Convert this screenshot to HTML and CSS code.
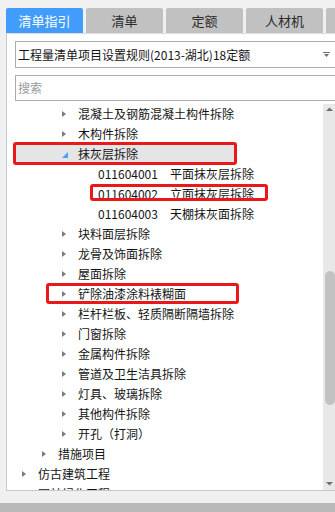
FILE: index.html
```html
<html>
  <head>
    <link rel="stylesheet" href="styles.css">
  </head>
  <body>
    <div class="tabs">
      <div class="tab tab--active">清单指引</div>
      <div class="tab">清单</div>
      <div class="tab">定额</div>
      <div class="tab">人材机</div>
      <div class="tab"></div>
    </div>
    <div class="panel">
      <div class="field field--select">
        <span>工程量清单项目设置规则(2013-湖北)18定额</span>
        <svg class="caret" width="7" height="5" viewBox="0 0 7 5"><rect x="0" y="0" width="7" height="1" fill="#6d6d6d"/><path d="M1 2h5l-2.5 3z" fill="#6d6d6d"/></svg>
      </div>
      <div class="field field--search">搜索</div>
      <div class="tree">
        <ul class="list">
          <li class="row lv3 shut">混凝土及钢筋混凝土构件拆除</li>
          <li class="row lv3 shut">木构件拆除</li>
          <li class="row lv3 open sel">抹灰层拆除<span class="mark mark--a"></span></li>
          <li class="row lv4"><span class="code">011604001</span>平面抹灰层拆除</li>
          <li class="row lv4"><span class="code">011604002</span>立面抹灰层拆除<span class="mark mark--b"></span></li>
          <li class="row lv4"><span class="code">011604003</span>天棚抹灰面拆除</li>
          <li class="row lv3 shut">块料面层拆除</li>
          <li class="row lv3 shut">龙骨及饰面拆除</li>
          <li class="row lv3 shut">屋面拆除</li>
          <li class="row lv3 shut">铲除油漆涂料裱糊面<span class="mark mark--c"></span></li>
          <li class="row lv3 shut">栏杆栏板、轻质隔断隔墙拆除</li>
          <li class="row lv3 shut">门窗拆除</li>
          <li class="row lv3 shut">金属构件拆除</li>
          <li class="row lv3 shut">管道及卫生洁具拆除</li>
          <li class="row lv3 shut">灯具、玻璃拆除</li>
          <li class="row lv3 shut">其他构件拆除</li>
          <li class="row lv3 shut">开孔（打洞）</li>
          <li class="row lv2 shut">措施项目</li>
          <li class="row lv1 shut">仿古建筑工程</li>
          <li class="row lv1 shut">园林绿化工程</li>
        </ul>
        <div class="scroll">
          <svg class="scroll__btn" width="13" height="11" viewBox="0 0 13 11"><path d="M3 7h7L6.5 3.5z" fill="#6d6d6d"/></svg>
          <div class="scroll__track"><div class="scroll__thumb"></div></div>
          <svg class="scroll__btn" width="13" height="12" viewBox="0 0 13 12"><path d="M3 4h7L6.5 7.5z" fill="#6d6d6d"/></svg>
        </div>
      </div>
    </div>
    <div class="statusbar"></div>
  </body>
</html>
```
FILE: styles.css
```css
* {
  margin: 0;
  padding: 0;
  box-sizing: border-box;
}

html, body {
  width: 335px;
  height: 512px;
  overflow: hidden;
}

body {
  background: #f0f0f0;
  font-family: "Noto Sans CJK SC", "Microsoft YaHei", sans-serif;
  font-size: 12px;
  color: #141414;
}

.tabs {
  display: flex;
  gap: 3px;
  padding: 8px 0 0 6px;
  height: 33px;
}

.tab {
  flex: 0 0 77px;
  height: 25px;
  line-height: 25px;
  text-align: center;
  font-size: 13px;
  background: #c1c1c1;
  color: #2a2a2a;
  border-radius: 2px 2px 0 0;
}

.tab--active {
  background: #419cfb;
  color: #fff;
}

.panel {
  margin-left: 6px;
  width: 330px;
  height: 458px;
  background: #fff;
  border-left: 1px solid #c8c8c8;
  border-top: 1px solid #dedede;
  border-bottom: 1px solid #c8c8c8;
  padding-top: 7px;
  padding-left: 8px;
}

.field {
  height: 27px;
  margin-right: -6px;
  border: 1px solid #acacac;
  padding-left: 2px;
  display: flex;
  align-items: center;
  line-height: 20px;
}

.field--select {
  justify-content: space-between;
  padding-right: 11px;
}

.caret {
  display: block;
}

.field--search {
  height: 26px;
  margin-top: 7px;
  color: #9a9a9a;
}

.tree {
  display: flex;
  height: 386px;
  margin-top: 3px;
  margin-left: -8px;
}

.list {
  flex: 1;
  list-style: none;
  overflow: hidden;
  padding-left: 7px;
}

.row {
  position: relative;
  display: flex;
  align-items: center;
  height: 20px;
  line-height: 20px;
  white-space: nowrap;
}

.lv1 { padding-left: 8px; }
.lv2 { padding-left: 28px; }
.lv3 { padding-left: 48px; }
.lv4 { padding-left: 84px; }

.shut::before {
  content: "";
  width: 0;
  height: 0;
  margin-right: 12px;
  border-left: 4px solid #7b7b7b;
  border-top: 3.5px solid transparent;
  border-bottom: 3.5px solid transparent;
}

.open::before {
  content: "";
  width: 0;
  height: 0;
  margin-right: 10px;
  margin-top: 1px;
  border-bottom: 6px solid #4d9ff5;
  border-left: 6px solid transparent;
}

.sel {
  width: 222px;
  background: #e5e5e5;
}

.code {
  margin-right: 12px;
}

/* red annotation frames drawn over the tree */
.mark {
  position: absolute;
  border: 3px solid #e8181b;
  border-radius: 3px;
}

.mark--a {
  left: -1px;
  top: -2px;
  width: 224px;
  height: 23px;
}

.mark--b {
  left: 76px;
  top: 0;
  width: 178px;
  height: 17px;
}

.mark--c {
  left: 32px;
  top: -1px;
  width: 193px;
  height: 21px;
}

.scroll {
  flex: 0 0 13px;
  display: flex;
  flex-direction: column;
  background: #e8e8e8;
}

.scroll__btn {
  display: block;
  flex: none;
}

.scroll__track {
  flex: 1;
  padding: 156px 1px 0 2px;
}

.scroll__thumb {
  height: 134px;
  background: #c2c2c2;
  border-radius: 5px;
}

.statusbar {
  margin-top: 12px;
  height: 9px;
  background: #b9b9b9;
}
```
